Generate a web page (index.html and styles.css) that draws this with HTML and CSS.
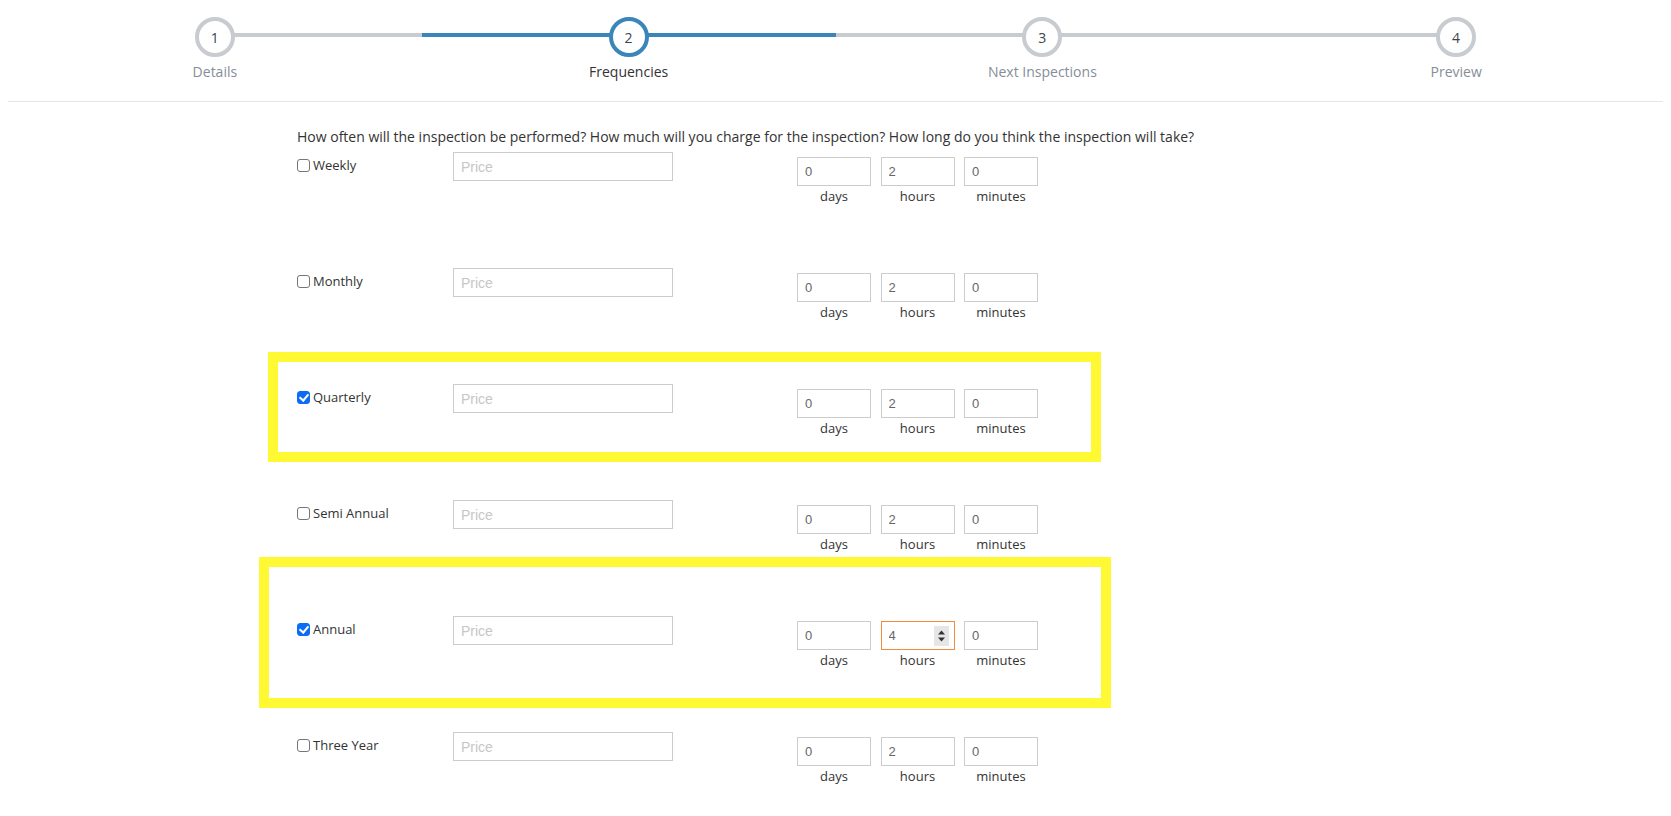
FILE: index.html
```html
<!DOCTYPE html>
<html lang="en">
<head>
    <meta charset="UTF-8">
    <meta name="viewport" content="width=device-width, initial-scale=1.0">
    <title>New Inspection - Frequencies</title>
    <link rel="stylesheet" href="styles.css">
</head>
<body>

    <div class="wizard">
        <div class="step done">
            <div class="circle">1</div>
            <div class="step-label">Details</div>
        </div>
        <div class="step active">
            <div class="circle">2</div>
            <div class="step-label">Frequencies</div>
        </div>
        <div class="step">
            <div class="circle">3</div>
            <div class="step-label">Next Inspections</div>
        </div>
        <div class="step">
            <div class="circle">4</div>
            <div class="step-label">Preview</div>
        </div>
    </div>

    <div class="content">
        <p class="question">How often will the inspection be performed? How much will you charge for the inspection? How long do you think the inspection will take?</p>

        <div class="freq-row">
            <label class="freq-label"><input type="checkbox"> Weekly</label>
            <input class="price" type="text" placeholder="Price">
            <div class="duration">
                <div class="field"><input type="text" value="0"><span>days</span></div>
                <div class="field"><input type="text" value="2"><span>hours</span></div>
                <div class="field"><input type="text" value="0"><span>minutes</span></div>
            </div>
        </div>

        <div class="freq-row">
            <label class="freq-label"><input type="checkbox"> Monthly</label>
            <input class="price" type="text" placeholder="Price">
            <div class="duration">
                <div class="field"><input type="text" value="0"><span>days</span></div>
                <div class="field"><input type="text" value="2"><span>hours</span></div>
                <div class="field"><input type="text" value="0"><span>minutes</span></div>
            </div>
        </div>

        <div class="freq-row">
            <div class="mark mark-quarterly"></div>
            <label class="freq-label"><input type="checkbox" checked> Quarterly</label>
            <input class="price" type="text" placeholder="Price">
            <div class="duration">
                <div class="field"><input type="text" value="0"><span>days</span></div>
                <div class="field"><input type="text" value="2"><span>hours</span></div>
                <div class="field"><input type="text" value="0"><span>minutes</span></div>
            </div>
        </div>

        <div class="freq-row">
            <label class="freq-label"><input type="checkbox"> Semi Annual</label>
            <input class="price" type="text" placeholder="Price">
            <div class="duration">
                <div class="field"><input type="text" value="0"><span>days</span></div>
                <div class="field"><input type="text" value="2"><span>hours</span></div>
                <div class="field"><input type="text" value="0"><span>minutes</span></div>
            </div>
        </div>

        <div class="freq-row">
            <div class="mark mark-annual"></div>
            <label class="freq-label"><input type="checkbox" checked> Annual</label>
            <input class="price" type="text" placeholder="Price">
            <div class="duration">
                <div class="field"><input type="text" value="0"><span>days</span></div>
                <div class="field">
                    <div class="spin-wrap">
                        <input class="focused" type="text" value="4">
                        <div class="spinner">
                            <svg width="9" height="14" viewBox="0 0 9 14"><path d="M4.5 1.5 L8 5.5 H1 Z M4.5 12.5 L8 8.5 H1 Z" fill="#333"/></svg>
                        </div>
                    </div>
                    <span>hours</span>
                </div>
                <div class="field"><input type="text" value="0"><span>minutes</span></div>
            </div>
        </div>

        <div class="freq-row">
            <label class="freq-label"><input type="checkbox"> Three Year</label>
            <input class="price" type="text" placeholder="Price">
            <div class="duration">
                <div class="field"><input type="text" value="0"><span>days</span></div>
                <div class="field"><input type="text" value="2"><span>hours</span></div>
                <div class="field"><input type="text" value="0"><span>minutes</span></div>
            </div>
        </div>
    </div>

</body>
</html>
```

FILE: styles.css
```css
* {
    box-sizing: border-box;
}

body {
    margin: 0 8px;
    font-family: 'Open Sans', 'Noto Sans', sans-serif;
    font-size: 13px;
    color: #333;
    background: #fff;
}

/* wizard steps */

.wizard {
    display: flex;
    padding: 17px 0 20px;
    border-bottom: 1px solid #e6e6e6;
}

.step {
    flex: 1;
    position: relative;
    text-align: center;
}

.step::before {
    content: '';
    position: absolute;
    top: 16px;
    left: 0;
    right: 0;
    height: 4px;
    background-color: #c8cbcf;
}

.step:first-child::before {
    left: 50%;
}

.step:last-child::before {
    right: 50%;
}

.step.active::before {
    background-color: #3a85ba;
}

.circle {
    position: relative;
    width: 40px;
    height: 40px;
    margin: 0 auto;
    border: 4px solid #c8cbcf;
    border-radius: 50%;
    background: #fff;
    display: flex;
    align-items: center;
    justify-content: center;
    font-size: 14px;
    color: #3b4550;
}

.step.active .circle {
    border-color: #3a85ba;
}

.step-label {
    margin-top: 5px;
    font-size: 14px;
    line-height: 19px;
    color: #858e97;
}

.step.active .step-label {
    color: #333;
}

/* frequencies form */

.content {
    padding-left: 289px;
}

.question {
    margin: 26px 0 6px;
    font-size: 14px;
    line-height: 18px;
    color: #333;
}

.freq-row {
    position: relative;
    display: flex;
    align-items: flex-start;
    height: 116px;
}

.freq-label {
    width: 156px;
    padding-top: 4px;
    line-height: 18px;
    display: flex;
    align-items: center;
}

.freq-label input {
    appearance: none;
    -webkit-appearance: none;
    width: 13px;
    height: 13px;
    margin: 0 3px 0 0;
    border: 1px solid #767676;
    border-radius: 3px;
    background: #fff;
    position: relative;
}

.freq-label input:checked {
    border-color: #0b6df6;
    background: #0b6df6;
}

.freq-label input:checked::after {
    content: '';
    position: absolute;
    left: 3px;
    top: 0px;
    width: 4px;
    height: 7px;
    border: solid #fff;
    border-width: 0 2px 2px 0;
    transform: rotate(40deg);
}

input[type="text"] {
    font-family: 'Liberation Sans', Arial, sans-serif;
    outline: none;
}

.price {
    width: 220px;
    height: 29px;
    padding: 0 7px;
    border: 1px solid #ccc;
    font-size: 14px;
    color: #555;
}

.price::placeholder {
    color: #c6c6c6;
}

.duration {
    display: flex;
    gap: 9.5px;
    margin: 5px 0 0 124px;
}

.field {
    width: 74px;
    text-align: center;
}

.field input {
    display: block;
    width: 74px;
    height: 29px;
    padding: 0 7px;
    border: 1px solid #ccc;
    font-size: 13px;
    color: #666;
}

.field span {
    display: block;
    margin-top: 1px;
    line-height: 18px;
}

.spin-wrap {
    position: relative;
}

.field input.focused {
    border-color: #f28b3c;
}

.spinner {
    position: absolute;
    top: 5px;
    right: 6px;
    width: 15px;
    height: 20px;
    background: #e6e6e6;
    display: flex;
    align-items: center;
    justify-content: center;
}

/* yellow annotation frames */

.mark {
    position: absolute;
    border: 10px solid #fff933;
    pointer-events: none;
}

.mark-quarterly {
    left: -29px;
    top: -32px;
    width: 833px;
    height: 110px;
}

.mark-annual {
    left: -38px;
    top: -59px;
    width: 852px;
    height: 151px;
}
```
